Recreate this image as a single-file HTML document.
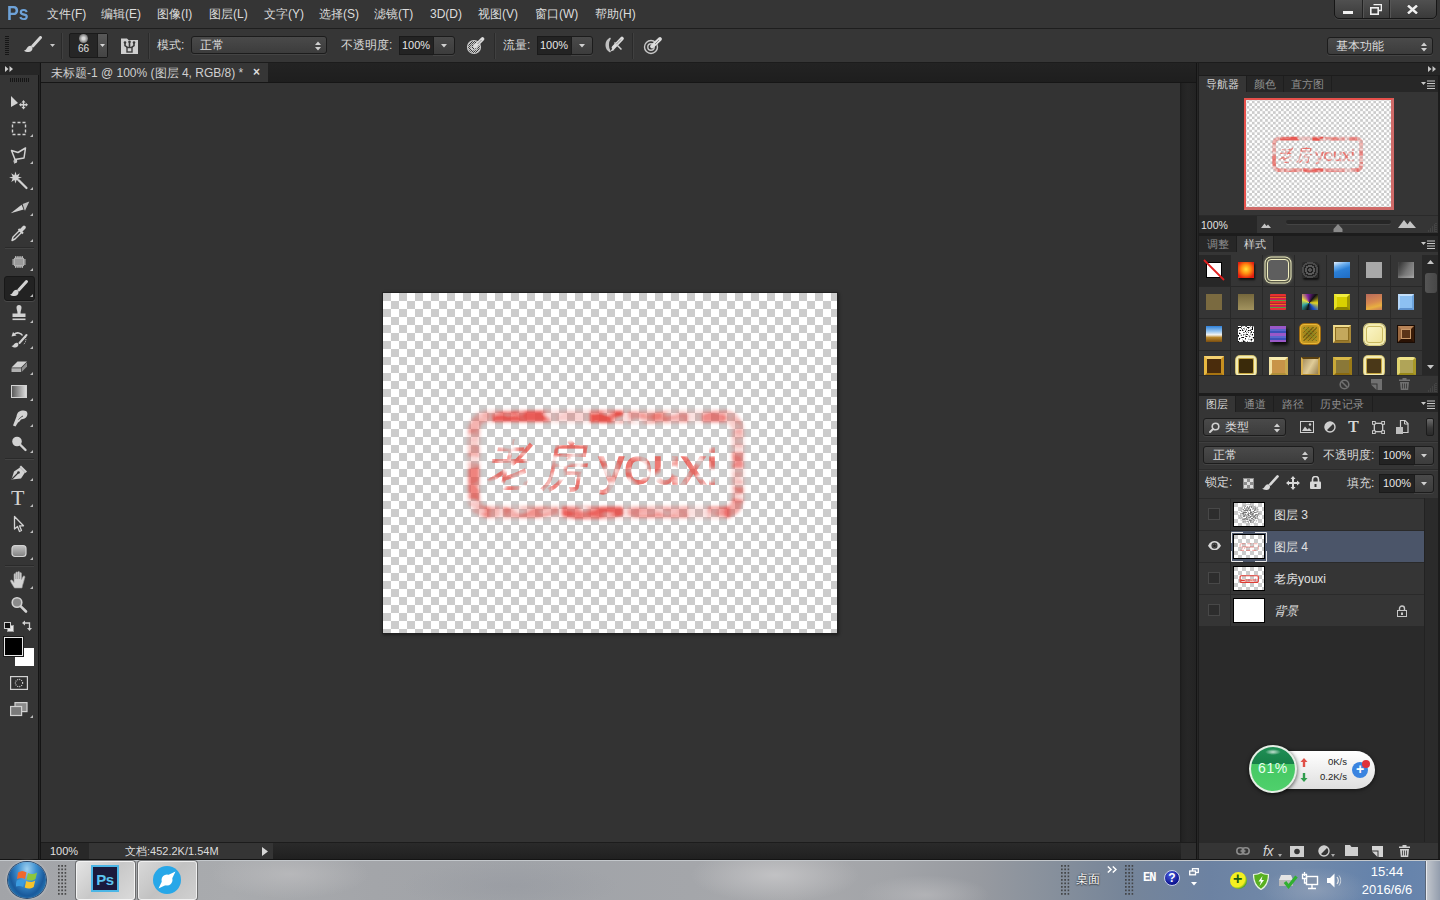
<!DOCTYPE html>
<html lang="zh">
<head>
<meta charset="utf-8">
<title>Photoshop</title>
<style>
*{box-sizing:border-box;margin:0;padding:0}
html,body{width:1440px;height:900px;overflow:hidden;background:#333;}
body{font-family:"Liberation Sans",sans-serif;font-size:12px;color:#d4d4d4;position:relative;}
.abs{position:absolute}
#menubar{left:0;top:0;width:1440px;height:28px;background:#353535;}
#menubar .mi{position:absolute;top:6px;font-size:12px;color:#dcdcdc;white-space:nowrap;line-height:16px}
#pslogo{position:absolute;left:7px;top:0px;font-size:21px;font-weight:bold;color:#6ea2d8;line-height:26px;transform:scaleX(.84);transform-origin:0 0}
#optbar{left:0;top:28px;width:1440px;height:35px;background:#363636;border-top:1px solid #1e1e1e;border-bottom:1px solid #1c1c1c}
.lbl{position:absolute;font-size:12px;color:#d8d8d8;white-space:nowrap;line-height:16px}
.sep{position:absolute;width:1px;background:#2a2a2a;border-right:1px solid #404040;width:2px}
.dd{position:absolute;background:linear-gradient(#4a4a4a,#3c3c3c);border:1px solid #1c1c1c;border-radius:3px;box-shadow:0 1px 0 #444}
.inp{position:absolute;background:#232323;border:1px solid #1a1a1a;color:#e6e6e6;font-size:11px;line-height:16px}
#toolbox{left:0;top:63px;width:41px;height:797px;background:#353535;border-right:3px solid #141414}
#toolbox:after{content:"";position:absolute;left:39px;top:0;width:1px;height:797px;background:#242424}
#tabstrip{left:41px;top:63px;width:1156px;height:20px;background:linear-gradient(#232323,#1e1e1e);border-bottom:1px solid #161616}
#doctab{left:41px;top:63px;width:227px;height:19px;background:#363636;color:#cfcfcf;font-size:12px;line-height:20px;padding-left:10px;white-space:nowrap}
#canvasarea{left:41px;top:83px;width:1139px;height:759px;background:#333333}
#vscroll{left:1180px;top:83px;width:16px;height:759px;background:linear-gradient(90deg,#1b1b1b 0,#232323 14%,#272727 50%,#232323 100%)}
#statusbar{left:41px;top:842px;width:1155px;height:18px;background:#252525;border-top:1px solid #1c1c1c}
#rightcol{left:1196px;top:63px;width:244px;height:797px;background:#1c1c1c;border-left:1px solid #141414;box-shadow:inset 1px 0 0 #262626}
.panel{position:absolute;left:2px;width:239px;background:#353535}
.tabrow{position:absolute;left:0;top:0;width:100%;height:16px;background:#272727}
.tab{position:absolute;top:0;height:16px;font-size:11px;line-height:16px;color:#8f8f8f;text-align:center;border-right:1px solid #1e1e1e;white-space:nowrap}
.tab.on{background:#353535;color:#d8d8d8}
#taskbar{left:0;top:860px;width:1440px;height:40px;background:linear-gradient(90deg,#a2a4a8 0%,#a9abae 16%,#a3a5a9 26%,#a0a3a8 36%,#a4a6aa 48%,#a8a9ac 55%,#a2a4a8 62%,#979aa0 68%,#87909c 73%,#768599 78%,#6c82a2 84%,#728aaa 90%,#6482ab 96%,#6a86ad 100%);border-top:1px solid #c4c8cc}
</style>
</head>
<body>
<!-- MENU BAR -->
<div id="menubar" class="abs">
  <div id="pslogo">Ps</div>
  <div class="mi" style="left:47px">文件(F)</div>
  <div class="mi" style="left:101px">编辑(E)</div>
  <div class="mi" style="left:157px">图像(I)</div>
  <div class="mi" style="left:209px">图层(L)</div>
  <div class="mi" style="left:264px">文字(Y)</div>
  <div class="mi" style="left:319px">选择(S)</div>
  <div class="mi" style="left:374px">滤镜(T)</div>
  <div class="mi" style="left:430px">3D(D)</div>
  <div class="mi" style="left:478px">视图(V)</div>
  <div class="mi" style="left:535px">窗口(W)</div>
  <div class="mi" style="left:595px">帮助(H)</div>
  <div class="abs" style="left:1334px;top:-1px;width:103px;height:20px;border:1px solid #161616;border-radius:0 0 5px 5px;background:linear-gradient(#505050,#3a3a3a);box-shadow:0 1px 0 #444"></div>
<div class="abs" style="left:1362px;top:0;width:1px;height:18px;background:#222;box-shadow:1px 0 0 #555"></div>
<div class="abs" style="left:1389px;top:0;width:1px;height:18px;background:#222;box-shadow:1px 0 0 #555"></div>
<div class="abs" style="left:1343px;top:11px;width:10px;height:3px;background:#f0f0f0"></div>
<svg class="abs" style="left:1370px;top:4px" width="12" height="11" viewBox="0 0 12 11"><path d="M3.500 .5H11.500V6.500H9" fill="none" stroke="#f0f0f0" stroke-width="1.600"/><rect x=".8" y="3.800" width="7.400" height="6.400" fill="none" stroke="#f0f0f0" stroke-width="1.600"/></svg>
<svg class="abs" style="left:1407px;top:5px" width="11" height="9" viewBox="0 0 11 9"><path d="M1 .5L10 8.500M10 .5L1 8.500" stroke="#f0f0f0" stroke-width="2.400"/></svg>
</div>
<!-- OPTIONS BAR -->
<div id="optbar" class="abs">
  <div class="abs" style="left:5px;top:7px;width:4px;height:20px;background:repeating-linear-gradient(#161616 0 1px,transparent 1px 2px)"></div>
<svg class="abs" style="left:24px;top:7px" width="18" height="16" viewBox="0 0 18 16"><path d="M16.500 1.500L8.800 10" stroke="#d4d4d4" stroke-width="3" stroke-linecap="round"/><path d="M0 14.500C3 14.500 2.800 9.800 6.300 9.800C9.500 10 9.500 16 4.500 16C2.500 16 .8 15.500 0 14.500Z" fill="#d4d4d4"/></svg>
<svg class="abs" style="left:50px;top:15px" width="5" height="3" viewBox="0 0 5 3"><path d="M0 0H5L2.500 3Z" fill="#c8c8c8"/></svg>
<div class="sep" style="left:61px;top:4px;height:26px"></div>
<div class="abs" style="left:69px;top:4px;width:39px;height:25px;background:#262626;border:1px solid #1a1a1a;border-radius:2px"></div>
<div class="abs" style="left:79px;top:5px;width:9px;height:9px;border-radius:50%;background:radial-gradient(circle,#d8d8d8 20%,#8a8a8a 60%,#555 100%)"></div>
<div class="abs" style="left:70px;top:14px;width:27px;text-align:center;font-size:10px;line-height:12px;color:#e0e0e0">66</div>
<div class="abs" style="left:97px;top:5px;width:10px;height:23px;background:linear-gradient(#585858,#444);border-left:1px solid #1c1c1c"><svg class="abs" style="left:2px;top:10px" width="5" height="3" viewBox="0 0 5 3"><path d="M0 0H5L2.500 3Z" fill="#d8d8d8"/></svg></div>
<svg class="abs" style="left:121px;top:8px" width="17" height="17" viewBox="0 0 17 17"><path d="M0 1.500H6L7.500 3H17V17H0Z" fill="#cfcfcf"/><path d="M4 5.500V8.500L6.500 10.500M8.500 5V10M13 5.500V8.500L10.500 10.500" stroke="#3a3a3a" stroke-width="1.600" fill="none"/><rect x="6" y="10.500" width="5" height="4.500" fill="none" stroke="#3a3a3a" stroke-width="1.400"/><circle cx="4" cy="5.500" r="1.300" fill="#3a3a3a"/><circle cx="8.500" cy="4.800" r="1.300" fill="#3a3a3a"/><circle cx="13" cy="5.500" r="1.300" fill="#3a3a3a"/></svg>
<div class="sep" style="left:148px;top:4px;height:26px"></div>
<span class="lbl" style="left:157px;top:8px">模式:</span>
<div class="dd" style="left:191px;top:7px;width:136px;height:18px"><span class="abs" style="left:8px;top:0;font-size:12px;line-height:16px;color:#dedede">正常</span><svg class="abs" style="right:5px;top:4px" width="6" height="10" viewBox="0 0 6 10"><path d="M0 4L3 0.500L6 4ZM0 6L3 9.500L6 6Z" fill="#cfcfcf"/></svg></div>
<span class="lbl" style="left:341px;top:8px">不透明度:</span>
<div class="inp" style="left:399px;top:7px;width:35px;height:19px;padding-left:2px;line-height:17px">100%</div>
<div class="dd" style="left:433px;top:7px;width:22px;height:19px;border-radius:0 3px 3px 0"><svg class="abs" style="left:7px;top:7px" width="6" height="3.500" viewBox="0 0 7 4"><path d="M0 0H7L3.500 4Z" fill="#d0d0d0"/></svg></div>
<svg class="abs" style="left:466px;top:7px" width="20" height="19" viewBox="0 0 20 19"><defs><pattern id="ck" width="2" height="2" patternUnits="userSpaceOnUse"><rect width="1" height="1" fill="#c8c8c8"/><rect x="1" y="1" width="1" height="1" fill="#c8c8c8"/></pattern></defs><circle cx="8" cy="11" r="6.500" fill="url(#ck)" stroke="#c8c8c8" stroke-width="1.200"/><circle cx="8" cy="11" r="3" fill="none" stroke="#c8c8c8" stroke-width="1.200"/><path d="M16.500 3L9 10.500" stroke="#dcdcdc" stroke-width="3.800" stroke-linecap="round"/><path d="M15.500 4L11.500 8" stroke="#8a8a8a" stroke-width="1"/></svg>
<div class="sep" style="left:494px;top:4px;height:26px"></div>
<span class="lbl" style="left:503px;top:8px">流量:</span>
<div class="inp" style="left:537px;top:7px;width:35px;height:19px;padding-left:2px;line-height:17px">100%</div>
<div class="dd" style="left:571px;top:7px;width:22px;height:19px;border-radius:0 3px 3px 0"><svg class="abs" style="left:7px;top:7px" width="6" height="3.500" viewBox="0 0 7 4"><path d="M0 0H7L3.500 4Z" fill="#d0d0d0"/></svg></div>
<svg class="abs" style="left:604px;top:7px" width="21" height="18" viewBox="0 0 21 18"><path d="M6 2.500C1 5.500 1 12.500 6 15.500C3.500 12 3.500 6 6 2.500Z" fill="#c0c0c0" stroke="#c0c0c0" stroke-width="1.600" stroke-linejoin="round"/><path d="M18 2.500L9.500 11.500" stroke="#dcdcdc" stroke-width="3.600" stroke-linecap="round"/><path d="M8.500 12L6.500 15.500L10.500 14Z" fill="#dcdcdc"/><path d="M10.500 6.500L17.500 13.500" stroke="#d0d0d0" stroke-width="1.500"/><path d="M17 3.500L12.500 8" stroke="#8a8a8a" stroke-width="1"/></svg>
<div class="sep" style="left:632px;top:4px;height:26px"></div>
<svg class="abs" style="left:643px;top:7px" width="21" height="19" viewBox="0 0 21 19"><circle cx="8" cy="11" r="6.500" fill="none" stroke="#c8c8c8" stroke-width="1.400"/><circle cx="8" cy="11" r="3.200" fill="none" stroke="#c8c8c8" stroke-width="1.400"/><path d="M17 3L9 10.500" stroke="#dcdcdc" stroke-width="3.800" stroke-linecap="round"/><path d="M16 4L12 8" stroke="#8a8a8a" stroke-width="1"/></svg>
<div class="dd" style="left:1327px;top:8px;width:106px;height:18px"><span class="abs" style="left:8px;top:0;font-size:12px;line-height:16px;color:#dedede">基本功能</span><svg class="abs" style="right:5px;top:4px" width="6" height="10" viewBox="0 0 6 10"><path d="M0 4L3 0.500L6 4ZM0 6L3 9.500L6 6Z" fill="#cfcfcf"/></svg></div>
</div>
<!-- TOOLBOX -->
<div id="toolbox" class="abs">
  <div class="abs" style="left:0;top:0;width:39px;height:12px;background:#262626"></div>
<svg class="abs" style="left:5px;top:3px" width="8" height="6" viewBox="0 0 8 6"><path d="M0 0L3.500 3L0 6ZM4.500 0L8 3L4.500 6Z" fill="#cfcfcf"/></svg>
<div class="abs" style="left:10px;top:15px;width:20px;height:4px;background:repeating-linear-gradient(90deg,#151515 0 1px,transparent 1px 2px)"></div>
<svg class="abs" style="left:8px;top:28px" width="22" height="22" viewBox="0 0 22 22"><path d="M3 5V16L10 12Z" fill="#d2d2d2"/><path d="M15.500 9L17.500 11.500H16.200V13H17.800V11.800L20 13.700L17.800 15.700V14.500H16.200V16H17.500L15.500 18.500L13.500 16H14.800V14.500H13.200V15.700L11 13.700L13.200 11.800V13H14.800V11.500H13.500Z" fill="#d2d2d2"/></svg>
<svg class="abs" style="left:8px;top:54px" width="22" height="22" viewBox="0 0 22 22"><rect x="4.500" y="5.500" width="13" height="12" fill="none" stroke="#d2d2d2" stroke-width="1.400" stroke-dasharray="3 2"/></svg>
<svg class="abs" style="left:30px;top:71px" width="3" height="3" viewBox="0 0 3 3"><path d="M3 0V3H0Z" fill="#bdbdbd"/></svg>
<svg class="abs" style="left:8px;top:81px" width="22" height="22" viewBox="0 0 22 22"><path d="M3.500 6.500L10 8.500L17.500 4L16 14L7 15.500Z" fill="none" stroke="#d2d2d2" stroke-width="1.500" stroke-linejoin="round"/><path d="M7.500 15.500C5.500 16 5.500 18.500 7.500 18.500C9 18.500 9 16.500 8 16L6.500 19.500" fill="none" stroke="#d2d2d2" stroke-width="1.100"/></svg>
<svg class="abs" style="left:30px;top:98px" width="3" height="3" viewBox="0 0 3 3"><path d="M3 0V3H0Z" fill="#bdbdbd"/></svg>
<svg class="abs" style="left:8px;top:107px" width="22" height="22" viewBox="0 0 22 22"><path d="M11 10.500L18.500 18" stroke="#d2d2d2" stroke-width="2.200" stroke-linecap="round"/><path d="M7.500 1.500L8.600 5.200L11.800 3.200L10.300 6.700L14 7.500L10.300 8.600L11.800 12L8.600 10L7.500 13.500L6.400 10L3.200 12L4.700 8.600L1 7.500L4.700 6.700L3.200 3.200L6.400 5.200Z" fill="#d2d2d2"/></svg>
<svg class="abs" style="left:30px;top:124px" width="3" height="3" viewBox="0 0 3 3"><path d="M3 0V3H0Z" fill="#bdbdbd"/></svg>
<svg class="abs" style="left:8px;top:133px" width="22" height="22" viewBox="0 0 22 22"><path d="M2.700 17.300L13.600 8.700L15.600 13.600Z" fill="#d2d2d2"/><path d="M14.600 8L21.300 5.600L17 14.700L16.400 13.800Z" fill="#bdbdbd"/></svg>
<svg class="abs" style="left:30px;top:150px" width="3" height="3" viewBox="0 0 3 3"><path d="M3 0V3H0Z" fill="#bdbdbd"/></svg>
<svg class="abs" style="left:8px;top:159px" width="22" height="22" viewBox="0 0 22 22"><path d="M4 18.500L5 15L11.500 8.500L13.500 10.500L7 17Z" fill="none" stroke="#d2d2d2" stroke-width="1.400" stroke-linejoin="round"/><path d="M10.500 7L15 11.500" stroke="#d2d2d2" stroke-width="2"/><path d="M13 8.500L16 5.500" stroke="#d2d2d2" stroke-width="3.600" stroke-linecap="round"/></svg>
<svg class="abs" style="left:30px;top:176px" width="3" height="3" viewBox="0 0 3 3"><path d="M3 0V3H0Z" fill="#bdbdbd"/></svg>
<div class="abs" style="left:5px;top:184px;width:29px;height:1px;background:#2a2a2a;border-bottom:1px solid #424242;height:2px"></div>
<svg class="abs" style="left:8px;top:188px" width="22" height="22" viewBox="0 0 22 22"><g transform="translate(2.200,2.200) scale(.8)"><rect x="5" y="6" width="12" height="10" rx="1.500" fill="#9a9a9a" stroke="#d2d2d2" stroke-width="1"/><path d="M7 3.500V6M9.700 3.500V6M12.300 3.500V6M15 3.500V6M7 16V18.500M9.700 16V18.500M12.300 16V18.500M15 16V18.500M2.500 8.500H5M2.500 11H5M2.500 13.500H5M17 8.500H19.500M17 11H19.500M17 13.500H19.500" stroke="#d2d2d2" stroke-width="1.300"/></g></svg>
<svg class="abs" style="left:30px;top:205px" width="3" height="3" viewBox="0 0 3 3"><path d="M3 0V3H0Z" fill="#bdbdbd"/></svg>
<div class="abs" style="left:4px;top:213px;width:31px;height:25px;background:#222;border-radius:3px;border:1px solid #181818;box-shadow:0 1px 0 #484848"></div>
<svg class="abs" style="left:8px;top:214px" width="22" height="22" viewBox="0 0 22 22"><g transform="translate(2,3)"><path d="M16.500 1.500L8.800 10" stroke="#d2d2d2" stroke-width="3" stroke-linecap="round"/><path d="M0 14.500C3 14.500 2.800 9.800 6.300 9.800C9.500 10 9.500 16 4.500 16C2.500 16 .8 15.500 0 14.500Z" fill="#d2d2d2"/></g></svg>
<svg class="abs" style="left:30px;top:231px" width="3" height="3" viewBox="0 0 3 3"><path d="M3 0V3H0Z" fill="#bdbdbd"/></svg>
<svg class="abs" style="left:8px;top:240px" width="22" height="22" viewBox="0 0 22 22"><path d="M8.500 4.500A2.500 2.500 0 1 1 13.500 4.500C13.500 6.500 12.500 8 12.500 10.500H17.500V14H4.500V10.500H9.500C9.500 8 8.500 6.500 8.500 4.500Z" fill="#d2d2d2"/><rect x="4.500" y="15.500" width="13" height="1.600" fill="#d2d2d2"/></svg>
<svg class="abs" style="left:30px;top:257px" width="3" height="3" viewBox="0 0 3 3"><path d="M3 0V3H0Z" fill="#bdbdbd"/></svg>
<svg class="abs" style="left:8px;top:266px" width="22" height="22" viewBox="0 0 22 22"><g transform="translate(3,5)"><path d="M15.500 1L8.500 9" stroke="#d2d2d2" stroke-width="2" stroke-linecap="round"/><path d="M.5 12C3 12 3 8.500 6 8.800C8.300 9.200 7.800 13.500 4.300 13.500C2.500 13.500 1 12.800 .5 12Z" fill="#d2d2d2"/></g><path d="M14.500 6.500C13 3.500 8.500 3 6 5.500" fill="none" stroke="#d2d2d2" stroke-width="1.600"/><path d="M3.500 7.500L5 3L8.500 6.500Z" fill="#d2d2d2"/><path d="M17.500 8C18.500 11 17.500 14 15 16" fill="none" stroke="#d2d2d2" stroke-width="1" stroke-dasharray="1 1.200"/></svg>
<svg class="abs" style="left:30px;top:283px" width="3" height="3" viewBox="0 0 3 3"><path d="M3 0V3H0Z" fill="#bdbdbd"/></svg>
<svg class="abs" style="left:8px;top:292px" width="22" height="22" viewBox="0 0 22 22"><path d="M3.500 12.500L9.500 6.500H19L13 12.500Z" fill="#d2d2d2"/><path d="M3.500 13.300H13V17H3.500Z" fill="#b0b0b0"/><path d="M13.700 13L19 7.500V11.500L13.700 17Z" fill="#8e8e8e"/></svg>
<svg class="abs" style="left:30px;top:309px" width="3" height="3" viewBox="0 0 3 3"><path d="M3 0V3H0Z" fill="#bdbdbd"/></svg>
<svg class="abs" style="left:8px;top:318px" width="22" height="22" viewBox="0 0 22 22"><defs><linearGradient id="gr1" x1="0" y1="0" x2="1" y2="0"><stop offset="0" stop-color="#555"/><stop offset="1" stop-color="#e0e0e0"/></linearGradient></defs><rect x="3.500" y="4.500" width="15" height="12" fill="url(#gr1)" stroke="#d2d2d2" stroke-width="1"/></svg>
<svg class="abs" style="left:30px;top:335px" width="3" height="3" viewBox="0 0 3 3"><path d="M3 0V3H0Z" fill="#bdbdbd"/></svg>
<svg class="abs" style="left:8px;top:344px" width="22" height="22" viewBox="0 0 22 22"><path d="M5 18.500L8.500 9.500C9 5 12 3.500 15.500 3.500C19.500 3.500 20 6.500 19 9C18 11.500 15.500 12 13 12.500C12 14 11 15 10 15.500L7.500 19.500Z" fill="#d2d2d2"/><path d="M10.500 12.500C12 11 13.500 9.500 15 9" fill="none" stroke="#4a4a4a" stroke-width="1"/></svg>
<svg class="abs" style="left:30px;top:361px" width="3" height="3" viewBox="0 0 3 3"><path d="M3 0V3H0Z" fill="#bdbdbd"/></svg>
<svg class="abs" style="left:8px;top:370px" width="22" height="22" viewBox="0 0 22 22"><circle cx="9" cy="8.500" r="4.800" fill="#d2d2d2"/><path d="M12.500 12L17.500 17" stroke="#d2d2d2" stroke-width="2.400" stroke-linecap="round"/></svg>
<svg class="abs" style="left:30px;top:387px" width="3" height="3" viewBox="0 0 3 3"><path d="M3 0V3H0Z" fill="#bdbdbd"/></svg>
<div class="abs" style="left:5px;top:395px;width:29px;height:1px;background:#2a2a2a;border-bottom:1px solid #424242;height:2px"></div>
<svg class="abs" style="left:8px;top:398px" width="22" height="22" viewBox="0 0 22 22"><path d="M3.500 18.500L6 10.500L12 6.500L17 11.500L13 17.500Z" fill="#d2d2d2"/><path d="M13 4.500L19 10.500L17.500 12L11.500 6Z" fill="#d2d2d2"/><path d="M4 18L10 12" stroke="#353535" stroke-width="1.100"/><circle cx="10.500" cy="11.500" r="1.300" fill="#353535"/></svg>
<svg class="abs" style="left:30px;top:415px" width="3" height="3" viewBox="0 0 3 3"><path d="M3 0V3H0Z" fill="#bdbdbd"/></svg>
<span class="abs" style="left:11px;top:423px;font-family:'Liberation Serif',serif;font-size:22px;line-height:24px;color:#d2d2d2">T</span>
<svg class="abs" style="left:30px;top:441px" width="3" height="3" viewBox="0 0 3 3"><path d="M3 0V3H0Z" fill="#bdbdbd"/></svg>
<svg class="abs" style="left:8px;top:450px" width="22" height="22" viewBox="0 0 22 22"><path d="M6.500 3.500V16L9.500 13.500L11.500 18.500L13.500 17.500L11.500 12.800H15.500Z" fill="#353535" stroke="#d2d2d2" stroke-width="1.300" stroke-linejoin="round"/></svg>
<svg class="abs" style="left:30px;top:467px" width="3" height="3" viewBox="0 0 3 3"><path d="M3 0V3H0Z" fill="#bdbdbd"/></svg>
<svg class="abs" style="left:8px;top:477px" width="22" height="22" viewBox="0 0 22 22"><defs><linearGradient id="gr2" x1="0" y1="0" x2="0" y2="1"><stop offset="0" stop-color="#c4c4c4"/><stop offset="1" stop-color="#808080"/></linearGradient></defs><rect x="4" y="5.500" width="14" height="11" rx="3" fill="url(#gr2)" stroke="#d2d2d2" stroke-width="1.200"/></svg>
<svg class="abs" style="left:30px;top:494px" width="3" height="3" viewBox="0 0 3 3"><path d="M3 0V3H0Z" fill="#bdbdbd"/></svg>
<div class="abs" style="left:5px;top:502px;width:29px;height:1px;background:#2a2a2a;border-bottom:1px solid #424242;height:2px"></div>
<svg class="abs" style="left:8px;top:506px" width="22" height="22" viewBox="0 0 22 22"><path d="M6.500 19C5 16.500 3 14 2.500 12C2.300 10.800 3.800 10.500 4.500 11.500L6 13.500V5.500C6 4.300 7.800 4.300 7.800 5.500V10V3.800C7.800 2.600 9.700 2.600 9.700 3.800V10V3.300C9.700 2.100 11.600 2.100 11.600 3.300V10V4.500C11.600 3.300 13.500 3.300 13.500 4.500V10.500L15 7.500C15.600 6.300 17.300 7 16.900 8.300C16 11 15.500 14 14.500 16.500L14 19Z" fill="#d2d2d2" stroke="#9a9a9a" stroke-width=".6"/></svg>
<svg class="abs" style="left:30px;top:523px" width="3" height="3" viewBox="0 0 3 3"><path d="M3 0V3H0Z" fill="#bdbdbd"/></svg>
<svg class="abs" style="left:8px;top:531px" width="22" height="22" viewBox="0 0 22 22"><circle cx="9" cy="8.500" r="4.800" fill="#8a8a8a" stroke="#d2d2d2" stroke-width="1.600"/><path d="M12.800 12.300L18 17.500" stroke="#d2d2d2" stroke-width="2.600" stroke-linecap="round"/></svg>
<svg class="abs" style="left:4px;top:559px" width="10" height="10" viewBox="0 0 10 10"><rect x="3.500" y="3.500" width="6" height="6" fill="#e8e8e8" stroke="#999" stroke-width="1"/><rect x=".5" y=".5" width="6" height="6" fill="#111" stroke="#ccc" stroke-width="1"/></svg>
<svg class="abs" style="left:22px;top:557px" width="11" height="11" viewBox="0 0 11 11"><path d="M2.500 3H7.500V8" fill="none" stroke="#d2d2d2" stroke-width="1.300"/><path d="M0 3L3 .5V5.500Z" fill="#d2d2d2"/><path d="M7.500 11L5 8H10Z" fill="#d2d2d2"/></svg>
<div class="abs" style="left:15px;top:585px;width:19px;height:18px;background:#fff"></div>
<div class="abs" style="left:4px;top:574px;width:19px;height:19px;background:#000;border:1px solid #e8e8e8;box-shadow:0 0 0 1px #1a1a1a"></div>
<svg class="abs" style="left:10px;top:613px" width="18" height="14" viewBox="0 0 18 14"><rect x=".6" y=".6" width="16.800" height="12.800" fill="#303030" stroke="#d2d2d2" stroke-width="1.200"/><circle cx="9" cy="7" r="3.600" fill="none" stroke="#d2d2d2" stroke-width="1.200" stroke-dasharray="1 1.100"/></svg>
<svg class="abs" style="left:10px;top:639px" width="18" height="15" viewBox="0 0 18 15"><rect x="5" y=".6" width="12" height="9" fill="#8a8a8a" stroke="#d2d2d2" stroke-width="1.200"/><rect x=".6" y="4.500" width="11" height="9" fill="#7a7a7a" stroke="#d2d2d2" stroke-width="1.200"/></svg>
<svg class="abs" style="left:30px;top:652px" width="3" height="3" viewBox="0 0 3 3"><path d="M3 0V3H0Z" fill="#bdbdbd"/></svg>
</div>
<!-- DOCUMENT -->
<div id="tabstrip" class="abs"></div>
<div id="doctab" class="abs">未标题-1 @ 100% (图层 4, RGB/8) * <span style="position:absolute;left:212px;top:-1px;font-size:12px;font-weight:bold;color:#ddd">×</span></div>
<div id="canvasarea" class="abs"></div>
<div id="vscroll" class="abs"></div>
<svg width="0" height="0" style="position:absolute">
<defs>
  <filter id="blotch" x="-5%" y="-10%" width="110%" height="120%">
    <feTurbulence type="fractalNoise" baseFrequency="0.035 0.06" numOctaves="2" seed="7" result="n"/>
    <feColorMatrix in="n" type="matrix" values="0 0 0 0 0  0 0 0 0 0  0 0 0 0 0  3.2 0 0 0 -1.15" result="a"/>
    <feGaussianBlur in="SourceGraphic" stdDeviation="1.3" result="b"/>
    <feComposite in="b" in2="a" operator="in"/>
  </filter>
  <filter id="blotch2" x="-5%" y="-10%" width="110%" height="120%">
    <feTurbulence type="fractalNoise" baseFrequency="0.06 0.08" numOctaves="2" seed="3" result="n"/>
    <feColorMatrix in="n" type="matrix" values="0 0 0 0 0  0 0 0 0 0  0 0 0 0 0  3.2 0 0 0 -1.05" result="a"/>
    <feGaussianBlur in="SourceGraphic" stdDeviation="0.7" result="b"/>
    <feComposite in="b" in2="a" operator="in"/>
  </filter>
  <filter id="mottle" x="-5%" y="-10%" width="110%" height="120%">
    <feTurbulence type="fractalNoise" baseFrequency="0.05 0.09" numOctaves="2" seed="11" result="n"/>
    <feColorMatrix in="n" type="matrix" values="0 0 0 0 0  0 0 0 0 0  0 0 0 0 0  2.6 0 0 0 -0.55" result="a"/>
    <feComposite in="SourceGraphic" in2="a" operator="in"/>
  </filter>
  <filter id="soft2" x="-20%" y="-50%" width="140%" height="200%"><feGaussianBlur stdDeviation="1.8"/></filter>
  <filter id="soft" x="-20%" y="-50%" width="140%" height="200%"><feGaussianBlur stdDeviation="2.2"/></filter>
  <g id="stamp">
    <rect x="90.8" y="123.2" width="264.0" height="95.99999999999999" rx="15" fill="none" stroke="#e8463e" stroke-width="12" opacity="0.16" filter="url(#soft)"/>
    <g filter="url(#mottle)"><g filter="url(#soft2)" stroke="#e8463e" fill="none" stroke-linecap="butt">
      <path d="M109 123.2H167" opacity="0.85" stroke-width="11"/>
<path d="M207 123.7H240" opacity="0.9" stroke-width="12"/>
<path d="M245 124.2H305" opacity="0.45" stroke-width="11"/>
<path d="M259 124.7H285" opacity="0.3" stroke-width="11"/>
<path d="M319 123.7H343" opacity="0.55" stroke-width="11"/>
<path d="M173 123.2H201" opacity="0.12" stroke-width="11"/>
<path d="M354.8 135V155" opacity="0.25" stroke-width="11"/>
<path d="M354.8 159V175" opacity="0.55" stroke-width="11"/>
<path d="M354.8 179V191" opacity="0.25" stroke-width="11"/>
<path d="M354.8 194V209" opacity="0.5" stroke-width="11"/>
<path d="M101 219.2H117" opacity="0.3" stroke-width="11"/>
<path d="M120 219.2H175" opacity="0.5" stroke-width="11"/>
<path d="M179 219.7H240" opacity="0.8" stroke-width="12"/>
<path d="M245 219.2H305" opacity="0.45" stroke-width="11"/>
<path d="M325 219.2H347" opacity="0.55" stroke-width="11"/>
<path d="M90.8 137V165" opacity="0.3" stroke-width="11"/>
<path d="M90.8 170V206" opacity="0.6" stroke-width="11"/>
<path d="M90.8 139Q90.8 123.2 107 123.2" opacity=".3" stroke-width="11"/>
<path d="M341 123.2Q354.8 123.2 354.8 139" opacity=".3" stroke-width="11"/>
<path d="M354.8 205Q354.8 219.2 341 219.2" opacity=".35" stroke-width="11"/>
<path d="M107 219.2Q90.8 219.2 90.8 205" opacity=".4" stroke-width="11"/>
    </g></g>
    <g filter="url(#blotch2)" fill="#e8463e" stroke="#e8463e" stroke-width=".5" font-family="'Liberation Sans',sans-serif" opacity=".72">
      <text x="0" y="0" font-size="46" transform="translate(103,191) skewX(-10) scale(1,1.18)" textLength="46" lengthAdjust="spacingAndGlyphs">老</text>
      <text x="0" y="0" font-size="46" transform="translate(157,192) skewX(-10) scale(1,1.18)" textLength="46" lengthAdjust="spacingAndGlyphs">房</text>
      <text x="215.5" y="190.5" font-size="50" textLength="119" lengthAdjust="spacingAndGlyphs" stroke-width="1.300">youxi</text>
    </g>
  </g>
</defs>
</svg>
<div id="doc" class="abs" style="left:383px;top:293px;width:454px;height:340px;background-color:#fff;background-image:conic-gradient(#ccc 25%,#fff 0 50%,#ccc 0 75%,#fff 0);background-size:16px 16px;background-position:8px 0;box-shadow:0 0 0 1px #222,1px 1px 3px 1px rgba(0,0,0,.45)">
  <svg width="454" height="340" viewBox="0 0 454 340" style="position:absolute;left:0;top:0"><use href="#stamp"/></svg>
</div>

<div id="statusbar" class="abs">
  <div class="abs" style="left:0;top:0;width:48px;height:18px;background:#282828;color:#e0e0e0;font-size:11px;line-height:16px;padding-left:9px">100%</div>
<div class="abs" style="left:48px;top:0;width:184px;height:18px;background:#353535;color:#dcdcdc;font-size:11px;line-height:16px;padding-left:36px;white-space:nowrap">文档:452.2K/1.54M</div>
<svg class="abs" style="left:221px;top:4px" width="6" height="9" viewBox="0 0 6 9"><path d="M0 0L6 4.500L0 9Z" fill="#d8d8d8"/></svg>
<div class="abs" style="left:232px;top:0;width:908px;height:18px;background:linear-gradient(#2a2a2a,#1f1f1f)"></div>
<div class="abs" style="left:1140px;top:0;width:16px;height:18px;background:#2f2f2f"></div>
</div>
<!-- RIGHT COLUMN -->
<div id="rightcol" class="abs">
  <!-- rightcol origin: x=1197,y=63 -->
<div class="abs" style="left:2px;top:0;width:241px;height:12px;background:#262626"></div>
<svg class="abs" style="left:231px;top:3px" width="8" height="6" viewBox="0 0 8 6"><path d="M0 0L3.500 3L0 6ZM4.500 0L8 3L4.500 6Z" fill="#c4c4c4"/></svg>
<!-- NAVIGATOR panel: y 76..233 => top 13 -->
<div class="panel" style="top:13px;height:157px">
  <div class="tabrow"></div>
  <div class="tab on" style="left:0;width:48px">导航器</div>
  <div class="tab" style="left:48px;width:37px">颜色</div>
  <div class="tab" style="left:85px;width:48px">直方图</div>
  <svg class="abs" style="left:222px;top:4px" width="14" height="9" viewBox="0 0 14 9"><path d="M0 2 h5 l-2.5 3z" fill="#c8c8c8"/><path d="M6 1h8M6 3.5h8M6 6h8M6 8.5h8" stroke="#c8c8c8" stroke-width="1"/></svg>
  <!-- thumbnail at page (1244,98) => panel-rel (45,22) -->
  <div class="abs" style="left:45px;top:22px;width:150px;height:112px;overflow:hidden;background-color:#fff;background-image:conic-gradient(#ccc 25%,#fff 0 50%,#ccc 0 75%,#fff 0);background-size:5.286px 5.286px;background-position:2.643px 0">
    <svg width="150" height="112" viewBox="0 0 454 340" style="position:absolute;left:0;top:0"><use href="#stamp"/></svg>
    <div class="abs" style="left:0;top:0;width:150px;height:112px;border:2px solid #e6504b;border-right:3px solid #cf6a68;border-bottom:3px solid #cf6a68"></div>
  </div>
  <!-- bottom row y 216..233 => rel 140 -->
  <div class="abs" style="left:0;top:139px;width:239px;height:1px;background:#2a2a2a"></div>
  <div class="abs" style="left:0;top:140px;width:58px;height:17px;background:#272727;color:#e2e2e2;font-size:10.500px;line-height:19px;padding-left:2px">100%</div>
  <svg class="abs" style="left:62px;top:146px" width="12" height="6" viewBox="0 0 12 6"><path d="M0 6 L3.5 1.5 L5.5 4 L7 2.5 L10 6Z" fill="#c4c4c4"/></svg>
  <div class="abs" style="left:87px;top:144px;width:105px;height:4px;background:#262626;border-radius:2px;box-shadow:0 1px 0 #444"></div>
  <svg class="abs" style="left:134px;top:148px" width="10" height="8" viewBox="0 0 10 8"><path d="M5 0 L9.5 5 V8 H0.5 V5Z" fill="#8a8a8a"/></svg>
  <svg class="abs" style="left:199px;top:143px" width="20" height="9" viewBox="0 0 20 9"><path d="M0 9 L6 1 L9.5 5.5 L12 2 L18 9Z" fill="#c4c4c4"/></svg>
  <svg class="abs" style="left:229px;top:147px" width="9" height="9" viewBox="0 0 9 9"><path d="M8 0v1M6 2h1M8 2v1M4 4h1M6 4h1M8 4v1M2 6h1M4 6h1M6 6h1M8 6v1M0 8h1M2 8h1M4 8h1M6 8h1M8 8v1" stroke="#555" stroke-width="1"/></svg>
</div>
<!-- STYLES panel: y 236..393 => top 173 -->
<div class="panel" style="top:173px;height:157px">
  <div class="tabrow"></div>
  <div class="tab" style="left:0;width:38px">调整</div>
  <div class="tab on" style="left:38px;width:37px">样式</div>
  <svg class="abs" style="left:222px;top:4px" width="14" height="9" viewBox="0 0 14 9"><path d="M0 2 h5 l-2.5 3z" fill="#c8c8c8"/><path d="M6 1h8M6 3.5h8M6 6h8M6 8.5h8" stroke="#c8c8c8" stroke-width="1"/></svg>
  <!-- grid at y=255 => rel 19 ; height to 374 => 120 -->
  <div id="stylegrid" class="abs" style="left:0;top:19px;width:225px;height:120px;overflow:hidden;background:#282828">
<div class="abs" style="left:0px;top:0px;width:31px;height:31px;background:#272727"><div class="abs" style="left:7px;top:7px;width:16px;height:16px;background:#fff;border:1px solid #000"><svg style="position:absolute;left:-4px;top:-4px" width="22" height="22" viewBox="0 0 22 22"><path d="M1 1L21 21" stroke="#e02020" stroke-width="1.800"/></svg></div></div>
<div class="abs" style="left:32px;top:0px;width:31px;height:31px;background:#353535"><div class="abs" style="left:7px;top:7px;width:16px;height:16px;background:radial-gradient(circle at 50% 45%,#ffe23a 0,#ff8a10 40%,#e01c10 80%);box-shadow:1px 2px 2px rgba(0,0,0,.7)"></div></div>
<div class="abs" style="left:64px;top:0px;width:31px;height:31px;background:#353535"><div class="abs" style="left:4px;top:4px;width:22px;height:22px;background:#5e5e5e;border-radius:4px;border:1px solid #f1efc0;box-shadow:0 0 0 1.500px #5a5a48,0 0 0 2.500px #ecebc0,0 0 3px 3px rgba(240,238,190,.25)"></div></div>
<div class="abs" style="left:96px;top:0px;width:31px;height:31px;background:#353535"><div class="abs" style="left:7px;top:7px;width:16px;height:16px;background:radial-gradient(circle,#555 0 2px,#1e1e1e 2px 3.500px,#5a5a5a 3.500px 5px,#222 5px 6.500px,#4a4a4a 6.500px 8px,#2a2a2a 8px);border-radius:2px;box-shadow:1px 2px 2px rgba(0,0,0,.7)"></div></div>
<div class="abs" style="left:128px;top:0px;width:31px;height:31px;background:#353535"><div class="abs" style="left:7px;top:7px;width:16px;height:16px;background:linear-gradient(160deg,#e8f2ff 0,#6fb0ee 25%,#2b7fd6 50%,#1f6cc4 100%)"></div></div>
<div class="abs" style="left:160px;top:0px;width:31px;height:31px;background:#353535"><div class="abs" style="left:7px;top:7px;width:16px;height:16px;background:#a8a8a8"></div></div>
<div class="abs" style="left:192px;top:0px;width:31px;height:31px;background:#353535"><div class="abs" style="left:7px;top:7px;width:16px;height:16px;background:linear-gradient(120deg,#3a3a3a 10%,#777 55%,#9a9a9a 100%);box-shadow:inset 0 -2px 2px rgba(255,255,255,.15)"></div></div>
<div class="abs" style="left:0px;top:32px;width:31px;height:31px;background:#353535"><div class="abs" style="left:7px;top:7px;width:16px;height:16px;background:#7a6a40"></div></div>
<div class="abs" style="left:32px;top:32px;width:31px;height:31px;background:#353535"><div class="abs" style="left:7px;top:7px;width:16px;height:16px;background:linear-gradient(#75673c,#a2935f)"></div></div>
<div class="abs" style="left:64px;top:32px;width:31px;height:31px;background:#353535"><div class="abs" style="left:7px;top:7px;width:16px;height:16px;background:repeating-linear-gradient(#e83030 0 2px,#b02828 2px 3px,#e86a20 3px 4px,#d02050 4px 6px,#58a040 6px 7px);border-radius:1px"></div></div>
<div class="abs" style="left:96px;top:32px;width:31px;height:31px;background:#353535"><div class="abs" style="left:7px;top:7px;width:16px;height:16px;background:conic-gradient(from 40deg at 45% 55%,#111,#e8d820,#1a50c8,#111,#30a0a0,#e8e040,#8020a0,#111)"></div></div>
<div class="abs" style="left:128px;top:32px;width:31px;height:31px;background:#353535"><div class="abs" style="left:7px;top:7px;width:16px;height:16px;background:#d8d000;border:3px solid;border-color:#f0ec40 #a09800 #8a8200 #e6e020"></div></div>
<div class="abs" style="left:160px;top:32px;width:31px;height:31px;background:#353535"><div class="abs" style="left:7px;top:7px;width:16px;height:16px;background:linear-gradient(165deg,#b86a5a 0,#d88a50 50%,#e8b040 75%,#c87858 100%)"></div></div>
<div class="abs" style="left:192px;top:32px;width:31px;height:31px;background:#353535"><div class="abs" style="left:7px;top:7px;width:16px;height:16px;background:#8cc0f2;border:2px solid;border-color:#c4e0fa #6ea4dc #5c90cc #b4d6f8"></div></div>
<div class="abs" style="left:0px;top:64px;width:31px;height:31px;background:#353535"><div class="abs" style="left:7px;top:7px;width:16px;height:16px;background:linear-gradient(#2e80d8 0,#9cc8f0 35%,#f4f4f0 55%,#b8862a 72%,#7a4e10 100%)"></div></div>
<div class="abs" style="left:32px;top:64px;width:31px;height:31px;background:#353535"><div class="abs" style="left:7px;top:7px;width:16px;height:16px;background:#fff;overflow:hidden"><svg width="16" height="16" style="position:absolute;left:0;top:0"><filter id="spk2"><feTurbulence type="fractalNoise" baseFrequency="0.7" numOctaves="1" seed="2"/><feColorMatrix type="matrix" values="0 0 0 0 0 0 0 0 0 0 0 0 0 0 0 6 0 0 0 -3"/></filter><rect width="16" height="16" filter="url(#spk2)"/></svg></div></div>
<div class="abs" style="left:64px;top:64px;width:31px;height:31px;background:#353535"><div class="abs" style="left:7px;top:7px;width:16px;height:16px;background:repeating-linear-gradient(#9a58c8 0 3px,#5a66cc 3px 5px,#3a50b8 5px 7px);box-shadow:2px 3px 3px rgba(0,0,0,.8)"></div></div>
<div class="abs" style="left:96px;top:64px;width:31px;height:31px;background:#353535"><div class="abs" style="left:4px;top:4px;width:22px;height:22px;background:radial-gradient(circle,#8a7018 0,#b8901e 55%,#d8a428 100%);border-radius:5px;border:1px solid #a06c10;box-shadow:inset 0 0 0 1px #e8b838"><div style="position:absolute;left:3px;top:3px;width:14px;height:14px;background:repeating-linear-gradient(45deg,rgba(120,150,40,.45) 0 1px,transparent 1px 3px),repeating-linear-gradient(-45deg,rgba(60,40,0,.4) 0 1px,transparent 1px 3px)"></div></div></div>
<div class="abs" style="left:128px;top:64px;width:31px;height:31px;background:#353535"><div class="abs" style="left:6px;top:6px;width:18px;height:18px;background:#c4a85c;border:2px solid;border-color:#f0dc90 #a88838 #98782c #e8d080;box-shadow:inset 0 0 0 1px #8a6c20"></div></div>
<div class="abs" style="left:160px;top:64px;width:31px;height:31px;background:#353535"><div class="abs" style="left:5px;top:5px;width:21px;height:21px;background:linear-gradient(135deg,#fbf6c8,#efe39a);border-radius:5px;border:2px solid #f4ecb0;box-shadow:inset 0 0 0 1px #c8b860,0 0 0 1px #d8cc80"></div></div>
<div class="abs" style="left:192px;top:64px;width:31px;height:31px;background:#353535"><div class="abs" style="left:7px;top:7px;width:16px;height:16px;background:#5a3418;border:3px solid;border-color:#b88458 #3a1c08 #2a1204 #9a6840;box-shadow:0 0 0 1px #1a0c04,inset 0 0 0 1px #c89868"></div></div>
<div class="abs" style="left:0px;top:96px;width:31px;height:31px;background:#353535"><div class="abs" style="left:5px;top:5px;width:20px;height:20px;background:#4a2c0c;border:3px solid;border-color:#f4d070 #c89020 #a87410 #e8b840"></div></div>
<div class="abs" style="left:32px;top:96px;width:31px;height:31px;background:#353535"><div class="abs" style="left:5px;top:5px;width:20px;height:20px;background:#3a2a0a;border-radius:4px;border:2px solid #f4ecb4;box-shadow:inset 0 0 0 1px #c8a840,0 0 0 1px #d0c070"></div></div>
<div class="abs" style="left:64px;top:96px;width:31px;height:31px;background:#353535"><div class="abs" style="left:6px;top:6px;width:19px;height:19px;background:#c89448;border:3px solid;border-color:#f8ecb0 #c8a850 #b09038 #f0e0a0"></div></div>
<div class="abs" style="left:96px;top:96px;width:31px;height:31px;background:#353535"><div class="abs" style="left:6px;top:6px;width:19px;height:19px;background:linear-gradient(120deg,#a89060,#e0cc98 50%,#988050);border:2px solid;border-color:#5a4010 #c8a040 #b89030 #d8b050"></div></div>
<div class="abs" style="left:128px;top:96px;width:31px;height:31px;background:#353535"><div class="abs" style="left:6px;top:6px;width:19px;height:19px;background:#8a7838;border:3px solid;border-color:#d8b848 #9a7a18 #8a6a10 #c8a838"></div></div>
<div class="abs" style="left:160px;top:96px;width:31px;height:31px;background:#353535"><div class="abs" style="left:5px;top:5px;width:20px;height:20px;background:#4a3818;border-radius:4px;border:2px solid #f4ecb4;box-shadow:inset 0 0 0 1px #c8a840,0 0 0 1px #d0c070"></div></div>
<div class="abs" style="left:192px;top:96px;width:31px;height:31px;background:#353535"><div class="abs" style="left:6px;top:6px;width:19px;height:19px;background:#b0a458;border-radius:3px;border:3px solid;border-color:#f0e48a #a89828 #988818 #e0d470"></div></div>
  </div>
  <div class="abs" style="left:225px;top:19px;width:14px;height:120px;background:#282828"></div>
  <svg class="abs" style="left:228px;top:24px" width="7" height="4" viewBox="0 0 7 4"><path d="M0 4L3.5 0L7 4Z" fill="#c8c8c8"/></svg>
  <div class="abs" style="left:226px;top:37px;width:12px;height:20px;border-radius:3px;background:linear-gradient(90deg,#555,#484848)"></div>
  <svg class="abs" style="left:228px;top:129px" width="7" height="4" viewBox="0 0 7 4"><path d="M0 0L3.5 4L7 0Z" fill="#c8c8c8"/></svg>
  <!-- bottom bar y 375..392 => rel 139 -->
  <div class="abs" style="left:0;top:139px;width:239px;height:18px;background:#353535;border-top:1px solid #2a2a2a"></div>
  <svg class="abs" style="left:140px;top:143px" width="11" height="11" viewBox="0 0 11 11"><circle cx="5.5" cy="5.5" r="4.3" fill="none" stroke="#707070" stroke-width="1.6"/><path d="M2.5 2.5L8.5 8.5" stroke="#707070" stroke-width="1.6"/></svg>
  <svg class="abs" style="left:172px;top:143px" width="11" height="11" viewBox="0 0 11 11"><path d="M0 0H11V11H6.5V4.5H0Z" fill="#707070"/><path d="M0 5.5H5.5V11Z" fill="#707070"/></svg>
  <svg class="abs" style="left:200px;top:142px" width="11" height="12" viewBox="0 0 11 12"><path d="M3.5 0h4v1.5h3.5v1.5h-11v-1.5h3.5z" fill="#707070"/><path d="M1 4h9l-.8 8h-7.400z" fill="#707070"/><path d="M3.500 5.500v5M5.500 5.500v5M7.500 5.500v5" stroke="#353535" stroke-width=".8"/></svg>
  <svg class="abs" style="left:229px;top:147px" width="9" height="9" viewBox="0 0 9 9"><path d="M8 0v1M6 2h1M8 2v1M4 4h1M6 4h1M8 4v1M2 6h1M4 6h1M6 6h1M8 6v1M0 8h1M2 8h1M4 8h1M6 8h1M8 8v1" stroke="#555" stroke-width="1"/></svg>
</div>
<!-- LAYERS panel: y 396..859 => top 333, height 464 -->
<div class="panel" style="top:333px;height:464px;background:#353535">
  <div class="tabrow"></div>
  <div class="tab on" style="left:0;width:37px">图层</div>
  <div class="tab" style="left:37px;width:38px">通道</div>
  <div class="tab" style="left:75px;width:38px">路径</div>
  <div class="tab" style="left:113px;width:61px">历史记录</div>
  <svg class="abs" style="left:222px;top:4px" width="14" height="9" viewBox="0 0 14 9"><path d="M0 2 h5 l-2.5 3z" fill="#c8c8c8"/><path d="M6 1h8M6 3.5h8M6 6h8M6 8.500h8" stroke="#c8c8c8" stroke-width="1"/></svg>
  <div class="dd" style="left:4px;top:22px;width:83px;height:18px"><svg class="abs" style="left:5px;top:3px" width="11" height="11" viewBox="0 0 11 11"><circle cx="6.500" cy="4.500" r="3.300" fill="none" stroke="#d0d0d0" stroke-width="1.600"/><path d="M4 7L1 10" stroke="#d0d0d0" stroke-width="2" stroke-linecap="round"/></svg><span class="abs" style="left:21px;top:0;font-size:12px;line-height:16px;color:#dedede">类型</span><svg class="abs" style="right:5px;top:4px" width="6" height="10" viewBox="0 0 6 10"><path d="M0 4L3 0.500L6 4ZM0 6L3 9.500L6 6Z" fill="#cfcfcf"/></svg></div>
<svg class="abs" style="left:101px;top:25px" width="14" height="12" viewBox="0 0 14 12"><rect x=".5" y=".5" width="13" height="11" fill="none" stroke="#cfcfcf"/><path d="M2 10L5 5.500L7.500 8.500L9 7L12 10Z" fill="#cfcfcf"/><circle cx="10" cy="3.500" r="1.200" fill="#cfcfcf"/></svg>
<svg class="abs" style="left:125px;top:25px" width="12" height="12" viewBox="0 0 12 12"><circle cx="6" cy="6" r="5" fill="none" stroke="#cfcfcf" stroke-width="1.400"/><path d="M9.700 2.300A5 5 0 0 0 2.300 9.700Z" fill="#cfcfcf"/></svg>
<span class="abs" style="left:149px;top:21px;font-family:'Liberation Serif',serif;font-size:17px;line-height:20px;color:#d8d8d8;text-shadow:.4px 0 0 #d8d8d8">T</span>
<svg class="abs" style="left:173px;top:25px" width="13" height="13" viewBox="0 0 14 14"><rect x="2.500" y="2.500" width="9" height="9" fill="none" stroke="#cfcfcf" stroke-width="1.400"/><rect x="0" y="0" width="4" height="4" fill="#cfcfcf"/><rect x="10" y="0" width="4" height="4" fill="#cfcfcf"/><rect x="0" y="10" width="4" height="4" fill="#cfcfcf"/><rect x="10" y="10" width="4" height="4" fill="#cfcfcf"/><rect x="1" y="1" width="2" height="2" fill="#353535"/><rect x="11" y="1" width="2" height="2" fill="#353535"/><rect x="1" y="11" width="2" height="2" fill="#353535"/><rect x="11" y="11" width="2" height="2" fill="#353535"/></svg>
<svg class="abs" style="left:197px;top:24px" width="13" height="14" viewBox="0 0 13 14"><path d="M4.500 .5H9L12 3.500V12.500H4.500Z" fill="none" stroke="#cfcfcf" stroke-width="1.200"/><path d="M8.500 .5V4H12" fill="none" stroke="#cfcfcf"/><rect x="0" y="7" width="7" height="7" fill="#bdbdbd"/></svg>
<div class="abs" style="left:227px;top:22px;width:8px;height:18px;border-radius:2px;border:1px solid #1c1c1c;background:linear-gradient(#6e6e6e,#3a3a3a 55%,#2a2a2a)"></div>
<div class="abs" style="left:0;top:45px;width:239px;height:1px;background:#2b2b2b;border-bottom:1px solid #3e3e3e;height:2px"></div>
<div class="dd" style="left:4px;top:50px;width:111px;height:18px"><span class="abs" style="left:9px;top:0;font-size:12px;line-height:16px;color:#dedede">正常</span><svg class="abs" style="right:5px;top:4px" width="6" height="10" viewBox="0 0 6 10"><path d="M0 4L3 0.500L6 4ZM0 6L3 9.500L6 6Z" fill="#cfcfcf"/></svg></div>
<span class="lbl" style="left:124px;top:51px">不透明度:</span>
<div class="inp" style="left:180px;top:50px;width:36px;height:19px;padding-left:3px;line-height:17px">100%</div>
<div class="dd" style="left:215px;top:50px;width:20px;height:19px;border-radius:0 3px 3px 0"><svg class="abs" style="left:6px;top:7px" width="6" height="3.500" viewBox="0 0 7 4"><path d="M0 0H7L3.500 4Z" fill="#d0d0d0"/></svg></div>
<div class="abs" style="left:0;top:73px;width:239px;height:2px;background:#2b2b2b;border-bottom:1px solid #3e3e3e"></div>
<span class="lbl" style="left:6px;top:78px">锁定:</span>
<svg class="abs" style="left:44px;top:82px" width="11" height="11" viewBox="0 0 11 11"><rect width="11" height="11" fill="#8d8d8d"/><rect x="1" y="1" width="3" height="3" fill="#dcdcdc"/><rect x="7" y="1" width="3" height="3" fill="#dcdcdc"/><rect x="4" y="4" width="3" height="3" fill="#dcdcdc"/><rect x="1" y="7" width="3" height="3" fill="#dcdcdc"/><rect x="7" y="7" width="3" height="3" fill="#dcdcdc"/></svg>
<svg class="abs" style="left:63px;top:79px" width="17" height="15" viewBox="0 0 18 16"><path d="M16.500 1.500L8.800 10" stroke="#d8d8d8" stroke-width="2.800" stroke-linecap="round"/><path d="M0 14.500C3 14.500 2.800 9.800 6.300 9.800C9.500 10 9.500 16 4.500 16C2.500 16 .8 15.500 0 14.500Z" fill="#d8d8d8"/></svg>
<svg class="abs" style="left:87px;top:80px" width="14" height="14" viewBox="0 0 14 14"><path d="M7 0L9.500 3H8V6H11V4.500L14 7L11 9.500V8H8V11H9.500L7 14L4.500 11H6V8H3V9.500L0 7L3 4.500V6H6V3H4.500Z" fill="#d8d8d8"/></svg>
<svg class="abs" style="left:111px;top:80px" width="11" height="13" viewBox="0 0 11 13"><path d="M2.500 6V3.500A3 3 0 0 1 8.500 3.500V6" fill="none" stroke="#d8d8d8" stroke-width="1.600"/><rect x="0" y="5.500" width="11" height="7.500" rx="1" fill="#d8d8d8"/><rect x="4.500" y="8" width="2" height="3" fill="#353535"/></svg>
<span class="lbl" style="left:148px;top:79px">填充:</span>
<div class="inp" style="left:180px;top:78px;width:36px;height:19px;padding-left:3px;line-height:17px">100%</div>
<div class="dd" style="left:215px;top:78px;width:20px;height:19px;border-radius:0 3px 3px 0"><svg class="abs" style="left:6px;top:7px" width="6" height="3.500" viewBox="0 0 7 4"><path d="M0 0H7L3.500 4Z" fill="#d0d0d0"/></svg></div>
<div class="abs" style="left:0;top:102px;width:225px;height:344px;background:#2a2a2a"></div>
<div class="abs" style="left:225px;top:102px;width:14px;height:344px;background:#2b2b2b;border-left:1px solid #222"></div>
<div class="abs" style="left:0;top:103px;width:31px;height:32px;background:#353535;border-bottom:1px solid #2a2a2a"></div>
<div class="abs" style="left:32px;top:103px;width:193px;height:32px;background:#353535;border-bottom:1px solid #2a2a2a"></div>
<div class="abs" style="left:9px;top:112px;width:12px;height:12px;background:#2d2d2d;border:1px solid #484848"></div>
<div class="abs" style="left:34px;top:106px;width:32px;height:25px;border:1px solid #000;background-color:#fff;background-image:conic-gradient(#ccc 25%,#fff 0 50%,#ccc 0 75%,#fff 0);background-size:8px 8px;background-position:4px 0;overflow:hidden"><svg width="30" height="23" viewBox="0 0 30 23" style="position:absolute;left:0;top:0"><defs><filter id="spk" x="0" y="0" width="100%" height="100%"><feTurbulence type="fractalNoise" baseFrequency="0.85" numOctaves="2" seed="5"/><feColorMatrix type="matrix" values="0 0 0 0 .15 0 0 0 0 .15 0 0 0 0 .15 5 0 0 0 -2.100" result="n"/><feComposite in="n" in2="SourceGraphic" operator="in"/></filter><radialGradient id="l3g"><stop offset="0" stop-color="#000" stop-opacity="1"/><stop offset=".6" stop-color="#000" stop-opacity=".85"/><stop offset="1" stop-color="#000" stop-opacity="0"/></radialGradient></defs><ellipse cx="15.500" cy="11" rx="12" ry="11.500" fill="url(#l3g)" filter="url(#spk)"/></svg></div>
<span class="abs" style="left:75px;top:111px;font-size:12px;line-height:16px;color:#e0e0e0;white-space:nowrap;">图层 3</span>
<div class="abs" style="left:0;top:135px;width:31px;height:32px;background:#353535;border-bottom:1px solid #2a2a2a"></div>
<div class="abs" style="left:32px;top:135px;width:193px;height:32px;background:#4b5569;border-bottom:1px solid #2a2a2a"></div>
<svg class="abs" style="left:9px;top:145px" width="13" height="9.300" viewBox="0 0 14 10"><path d="M0 5C2 1.500 4.500 0 7 0S12 1.500 14 5C12 8.500 9.500 10 7 10S2 8.500 0 5Z" fill="#d6d6d6"/><circle cx="7" cy="5" r="3.300" fill="#3a3a3a"/><circle cx="7" cy="5" r="1.700" fill="#d6d6d6"/><circle cx="7" cy="5" r="1.700" fill="#222"/></svg>
<div class="abs" style="left:34px;top:138px;width:32px;height:25px;border:1px solid #000;background-color:#fff;background-image:conic-gradient(#ccc 25%,#fff 0 50%,#ccc 0 75%,#fff 0);background-size:8px 8px;background-position:4px 0;overflow:hidden"><svg width="31" height="24" viewBox="0 0 454 340" style="position:absolute;left:0;top:0"><rect x="89" y="122" width="267" height="97" rx="15" fill="none" stroke="#e8463e" stroke-width="16" opacity=".45" stroke-dasharray="60 30"/><text x="110" y="190" font-size="60" fill="#e8463e" opacity=".6" font-family="Liberation Sans,sans-serif" font-weight="bold">yyouxi</text></svg></div>
<svg class="abs" style="left:32px;top:136px" width="36" height="30" viewBox="0 0 36 30"><path d="M.5 11V.5H12M24 .5H35.500V11M35.500 19V29.500H24M12 29.500H.5V19" fill="none" stroke="#e8e8e8" stroke-width="1"/></svg>
<span class="abs" style="left:75px;top:143px;font-size:12px;line-height:16px;color:#e0e0e0;white-space:nowrap;">图层 4</span>
<div class="abs" style="left:0;top:167px;width:31px;height:32px;background:#353535;border-bottom:1px solid #2a2a2a"></div>
<div class="abs" style="left:32px;top:167px;width:193px;height:32px;background:#353535;border-bottom:1px solid #2a2a2a"></div>
<div class="abs" style="left:9px;top:176px;width:12px;height:12px;background:#2d2d2d;border:1px solid #484848"></div>
<div class="abs" style="left:34px;top:170px;width:32px;height:25px;border:1px solid #000;background-color:#fff;background-image:conic-gradient(#ccc 25%,#fff 0 50%,#ccc 0 75%,#fff 0);background-size:8px 8px;background-position:4px 0;overflow:hidden"><svg width="31" height="24" viewBox="0 0 454 340" style="position:absolute;left:0;top:0"><rect x="89" y="122" width="267" height="97" rx="15" fill="none" stroke="#e03a32" stroke-width="17"/><text x="100" y="192" font-size="62" fill="#e03a32" font-family="Liberation Sans,sans-serif" font-weight="bold">▬youxi</text></svg></div>
<span class="abs" style="left:75px;top:175px;font-size:12px;line-height:16px;color:#e0e0e0;white-space:nowrap;">老房youxi</span>
<div class="abs" style="left:0;top:199px;width:31px;height:32px;background:#353535;border-bottom:1px solid #2a2a2a"></div>
<div class="abs" style="left:32px;top:199px;width:193px;height:32px;background:#353535;border-bottom:1px solid #2a2a2a"></div>
<div class="abs" style="left:9px;top:208px;width:12px;height:12px;background:#2d2d2d;border:1px solid #484848"></div>
<div class="abs" style="left:34px;top:202px;width:32px;height:25px;border:1px solid #000;background:#fff"></div>
<span class="abs" style="left:75px;top:207px;font-size:12px;line-height:16px;color:#e0e0e0;white-space:nowrap;font-style:italic;">背景</span>
<svg class="abs" style="left:198px;top:209px" width="10" height="12" viewBox="0 0 10 12"><path d="M2.500 5.500V3.500A2.500 2.500 0 0 1 7.500 3.500V5.500" fill="none" stroke="#c8c8c8" stroke-width="1.400"/><rect x=".5" y="5.500" width="9" height="6" fill="none" stroke="#c8c8c8"/><rect x="4" y="7.500" width="2" height="2.500" fill="#c8c8c8"/></svg>
<div class="abs" style="left:0;top:446px;width:239px;height:18px;background:#353535;border-top:1px solid #2a2a2a"></div>
<svg class="abs" style="left:37px;top:451px" width="14" height="8" viewBox="0 0 14 8"><rect x=".8" y=".8" width="7" height="6.400" rx="3.200" fill="none" stroke="#8a8a8a" stroke-width="1.600"/><rect x="6.200" y=".8" width="7" height="6.400" rx="3.200" fill="none" stroke="#8a8a8a" stroke-width="1.600"/><path d="M4.500 4H9.500" stroke="#8a8a8a" stroke-width="1.600"/></svg>
<span class="abs" style="left:64px;top:446px;font-style:italic;font-size:14px;line-height:18px;color:#d4d4d4;letter-spacing:-.3px">fx</span><svg class="abs" style="left:79px;top:458px" width="4" height="3" viewBox="0 0 4 3"><path d="M0 0H4L2 3Z" fill="#aaa"/></svg>
<svg class="abs" style="left:91px;top:450px" width="14" height="11" viewBox="0 0 14 11"><rect width="14" height="11" fill="#cfcfcf"/><circle cx="7" cy="5.500" r="2.800" fill="#353535"/></svg>
<svg class="abs" style="left:119px;top:449px" width="12" height="12" viewBox="0 0 12 12"><circle cx="6" cy="6" r="5" fill="none" stroke="#cfcfcf" stroke-width="1.400"/><path d="M9.700 2.300A5 5 0 0 0 2.300 9.700Z" fill="#cfcfcf"/></svg><svg class="abs" style="left:132px;top:458px" width="4" height="3" viewBox="0 0 4 3"><path d="M0 0H4L2 3Z" fill="#aaa"/></svg>
<svg class="abs" style="left:146px;top:449px" width="13" height="11" viewBox="0 0 13 11"><path d="M0 0H5L6.500 2H13V11H0Z" fill="#cfcfcf"/></svg>
<svg class="abs" style="left:173px;top:450px" width="11" height="11" viewBox="0 0 11 11"><path d="M0 0H11V11H6.500V4.500H0Z" fill="#d4d4d4"/><path d="M0 5.500H5.500V11Z" fill="#d4d4d4"/></svg>
<svg class="abs" style="left:200px;top:449px" width="11" height="12" viewBox="0 0 11 12"><path d="M3.500 0h4v1.500h3.500v1.500h-11v-1.500h3.500z" fill="#cfcfcf"/><path d="M1 4h9l-.8 8h-7.400z" fill="#cfcfcf"/><path d="M3.500 5.500v5M5.500 5.500v5M7.500 5.500v5" stroke="#353535" stroke-width=".8"/></svg>
</div>

</div>
<div class="abs" style="left:0;top:859px;width:1440px;height:1px;background:#141414"></div>
<!-- TASKBAR -->
<div id="taskbar" class="abs">
  <div class="abs" style="left:0;top:0;width:1440px;height:39px;overflow:hidden"><div class="abs" style="left:690px;top:-14px;width:170px;height:56px;background:radial-gradient(ellipse,rgba(198,198,200,.85),rgba(198,198,200,0) 70%)"></div><div class="abs" style="left:860px;top:14px;width:130px;height:40px;background:radial-gradient(ellipse,rgba(186,186,189,.7),rgba(186,186,189,0) 70%)"></div><div class="abs" style="left:210px;top:-12px;width:160px;height:50px;background:radial-gradient(ellipse,rgba(190,190,192,.7),rgba(190,190,192,0) 70%)"></div><div class="abs" style="left:400px;top:0px;width:220px;height:50px;background:radial-gradient(ellipse,rgba(150,153,160,.55),rgba(150,153,160,0) 70%)"></div><div class="abs" style="left:1260px;top:6px;width:110px;height:46px;background:radial-gradient(ellipse,rgba(150,164,186,.7),rgba(150,164,186,0) 70%)"></div></div>
<div class="abs" style="left:8px;top:1px;width:38px;height:36px;border-radius:50%;background:radial-gradient(ellipse at 50% 20%,#9fd0f0 0,#3c8fd0 35%,#1a5a9c 65%,#2f9ad0 100%);box-shadow:0 0 0 1px #2a4a70,0 0 3px 1px rgba(255,255,255,.5)"></div>
<svg class="abs" style="left:16px;top:7px" width="23" height="23" viewBox="0 0 23 23"><path d="M2 4.500C5 2.500 7.500 2.500 10.500 4.500L9 11C6.500 9.500 4 9.500 1 11Z" fill="#f0682c"/><path d="M12 5C14.500 6.500 17.500 6.500 21 4.500L19.500 11C16.500 13 13.500 13 10.500 11.500Z" fill="#8cc63c"/><path d="M.7 12.500C3.500 11 6 11 8.700 12.500L7.200 19C4.500 17.500 2 17.500 -.8 19Z" fill="#3c9ce0"/><path d="M10.200 13C13 14.500 16 14.500 19.200 12.500L17.700 19C14.500 21 11.500 21 8.700 19.500Z" fill="#f8c42c"/></svg>
<div class="abs" style="left:58px;top:4px;width:9px;height:31px;background-image:radial-gradient(circle at 1px 1px,#3a3a3a 0 1px,transparent 1.100px);background-size:3.300px 3.500px;opacity:.85"></div>
<div class="abs" style="left:76px;top:0px;width:59px;height:39px;border-radius:3px;border:1px solid #f4f4f4;background:linear-gradient(135deg,#e4e4e4 0,#c8c8c8 50%,#dadada 100%);box-shadow:0 0 0 1px rgba(60,60,60,.55)"></div>
<div class="abs" style="left:91px;top:4px;width:28px;height:27px;background:#1b1a3c;border:2px solid #4cb6e6;color:#5cc4f0;font-weight:bold;font-size:15px;line-height:25px;text-align:center;letter-spacing:-.3px">Ps</div>
<div class="abs" style="left:138px;top:0px;width:59px;height:39px;border-radius:3px;border:1px solid #f0f0f0;background:linear-gradient(135deg,#d8d8d8 0,#c2c2c2 50%,#d0d0d0 100%);box-shadow:0 0 0 1px rgba(60,60,60,.55)"></div>
<svg class="abs" style="left:153px;top:5px" width="28" height="28" viewBox="0 0 28 28"><circle cx="14" cy="14" r="14" fill="#27a7e8"/><path d="M22.500 5.500L17 17L5.500 22.500L11 11Z" fill="#fff"/><circle cx="14" cy="14" r="5.500" fill="#fff"/></svg>
<div class="abs" style="left:1061px;top:4px;width:9px;height:31px;background-image:radial-gradient(circle at 1px 1px,#3a3a3a 0 1px,transparent 1.100px);background-size:3.300px 3.500px;opacity:.85"></div>
<span class="abs" style="left:1076px;top:10px;font-size:12px;line-height:16px;color:#fff;white-space:nowrap;text-shadow:0 0 2px rgba(0,0,0,.8),0 1px 1px rgba(0,0,0,.5)">桌面</span>
<svg class="abs" style="left:1107px;top:5px" width="10" height="7" viewBox="0 0 10 7"><path d="M.8 .5L4 3.500L.8 6.500M5.800 .5L9 3.500L5.800 6.500" fill="none" stroke="#fff" stroke-width="1.500"/></svg>
<div class="abs" style="left:1125px;top:4px;width:9px;height:31px;background-image:radial-gradient(circle at 1px 1px,#3a3a3a 0 1px,transparent 1.100px);background-size:3.300px 3.500px;opacity:.85"></div>
<span class="abs" style="left:1143px;top:9px;font-family:'Liberation Mono',monospace;font-size:12px;line-height:16px;color:#fff;letter-spacing:-1px;font-weight:bold">EN</span>
<div class="abs" style="left:1164px;top:9px;width:16px;height:16px;border-radius:50%;background:radial-gradient(circle at 40% 30%,#4a5ce0,#0c1490 70%);border:1px solid #c8d0e8;color:#fff;font-weight:bold;font-size:12px;line-height:14px;text-align:center">?</div>
<svg class="abs" style="left:1189px;top:7px" width="10" height="8" viewBox="0 0 10 8"><rect x="3.500" y=".7" width="5.800" height="3.800" fill="none" stroke="#fff" stroke-width="1.300"/><rect x=".7" y="3" width="5.800" height="3.800" fill="#7a8aa0" stroke="#fff" stroke-width="1.300"/></svg>
<svg class="abs" style="left:1191px;top:21px" width="6" height="4" viewBox="0 0 6 4"><path d="M0 0H6L3 3.500Z" fill="#fff"/></svg>
<div class="abs" style="left:1230px;top:11px;width:17px;height:17px;border-radius:50%;background:radial-gradient(circle at 40% 40%,#f4f020 0 55%,#3c9c20 75%);"></div><span class="abs" style="left:1233px;top:9px;font-size:16px;font-weight:bold;line-height:18px;color:#1a5a10">+</span>
<svg class="abs" style="left:1253px;top:11px" width="16" height="18" viewBox="0 0 16 18"><path d="M8 .5C10 2 13 2.500 15.500 2.500C15.500 9 14 14 8 17.500C2 14 .5 9 .5 2.500C3 2.500 6 2 8 .5Z" fill="#58b020" stroke="#e8f4e0" stroke-width="1.200"/><path d="M9.500 4L5.500 9.500H8L6.500 14L11 8H8.500Z" fill="#fff"/></svg>
<svg class="abs" style="left:1278px;top:11px" width="20" height="18" viewBox="0 0 20 18"><path d="M3 3H13L15 8H1Z" fill="#e4e4e4"/><rect x="1" y="8" width="14" height="6" fill="#b8b8b8"/><path d="M7 10L10.500 14.500L18.500 4.500" fill="none" stroke="#30b030" stroke-width="3.200"/></svg>
<svg class="abs" style="left:1301px;top:10px" width="18" height="19" viewBox="0 0 18 19"><rect x="5.500" y="5.500" width="11" height="8" fill="#8090a8" stroke="#fff" stroke-width="1.400"/><path d="M7 17.500H15M11 14V17" stroke="#fff" stroke-width="1.400"/><path d="M3.500 1V5M1.500 3.500H5.500V7.500H1.500ZM3.500 7.500V12H5.500" fill="none" stroke="#fff" stroke-width="1.300"/></svg>
<svg class="abs" style="left:1326px;top:11px" width="16" height="17" viewBox="0 0 16 17"><path d="M1 6H4L8.500 1.500V15.500L4 11H1Z" fill="#fff"/><path d="M11 5C12.500 7 12.500 10 11 12" fill="none" stroke="#e8e8e8" stroke-width="1.200"/><path d="M13 3.500C15.200 6.500 15.200 10.500 13 13.500" fill="none" stroke="#d0d8e0" stroke-width="1"/></svg>
<div class="abs" style="left:1352px;top:3px;width:70px;text-align:center;font-size:13px;line-height:16px;color:#fff">15:44</div>
<div class="abs" style="left:1352px;top:21px;width:70px;text-align:center;font-size:13px;line-height:16px;color:#fff">2016/6/6</div>
<div class="abs" style="left:1425px;top:0;width:15px;height:39px;background:linear-gradient(90deg,#c4c8ce,#939dad);border-left:1px solid #5a6678;box-shadow:inset 1px 0 0 #e8eaee"></div>
</div>
<div class="abs" style="left:1268px;top:751px;width:107px;height:38px;border-radius:0 19px 19px 0;background:linear-gradient(#ffffff,#ececec 60%,#dedede);box-shadow:0 1px 4px rgba(0,0,0,.6)"></div>
<div class="abs" style="left:1249px;top:745px;width:48px;height:48px;border-radius:50%;background:#e6efe6;box-shadow:0 1px 4px rgba(0,0,0,.7)"></div>
<div class="abs" style="left:1251px;top:747px;width:44px;height:44px;border-radius:50%;background:linear-gradient(#1f8f55 0,#178048 38%,#45c863 38.500%,#4fd06c 100%);overflow:hidden"><div class="abs" style="left:14px;top:2px;width:16px;height:6px;border-radius:50%;background:radial-gradient(ellipse,rgba(255,255,255,.75),rgba(255,255,255,0) 70%)"></div></div>
<div class="abs" style="left:1251px;top:759px;width:44px;text-align:center;font-size:14px;line-height:18px;color:#e8fff0;letter-spacing:.6px">61%</div>
<svg class="abs" style="left:1300px;top:758px" width="8" height="9" viewBox="0 0 8 9"><path d="M4 0L7.500 4H5.200V9H2.800V4H.5Z" fill="#e05048"/></svg>
<svg class="abs" style="left:1300px;top:773px" width="8" height="9" viewBox="0 0 8 9"><path d="M4 9L7.500 5H5.200V0H2.800V5H.5Z" fill="#2f9c4c"/></svg>
<div class="abs" style="left:1310px;top:755px;width:37px;text-align:right;font-size:9.500px;line-height:14px;color:#222">0K/s</div>
<div class="abs" style="left:1310px;top:770px;width:37px;text-align:right;font-size:9.500px;line-height:14px;color:#222">0.2K/s</div>
<div class="abs" style="left:1352px;top:762px;width:16px;height:16px;border-radius:50%;background:#3a84e0;color:#fff;font-weight:bold;font-size:14px;line-height:15px;text-align:center">+</div>
<div class="abs" style="left:1362px;top:760px;width:8px;height:8px;border-radius:50%;background:#e0303c"></div>
</body>
</html>
